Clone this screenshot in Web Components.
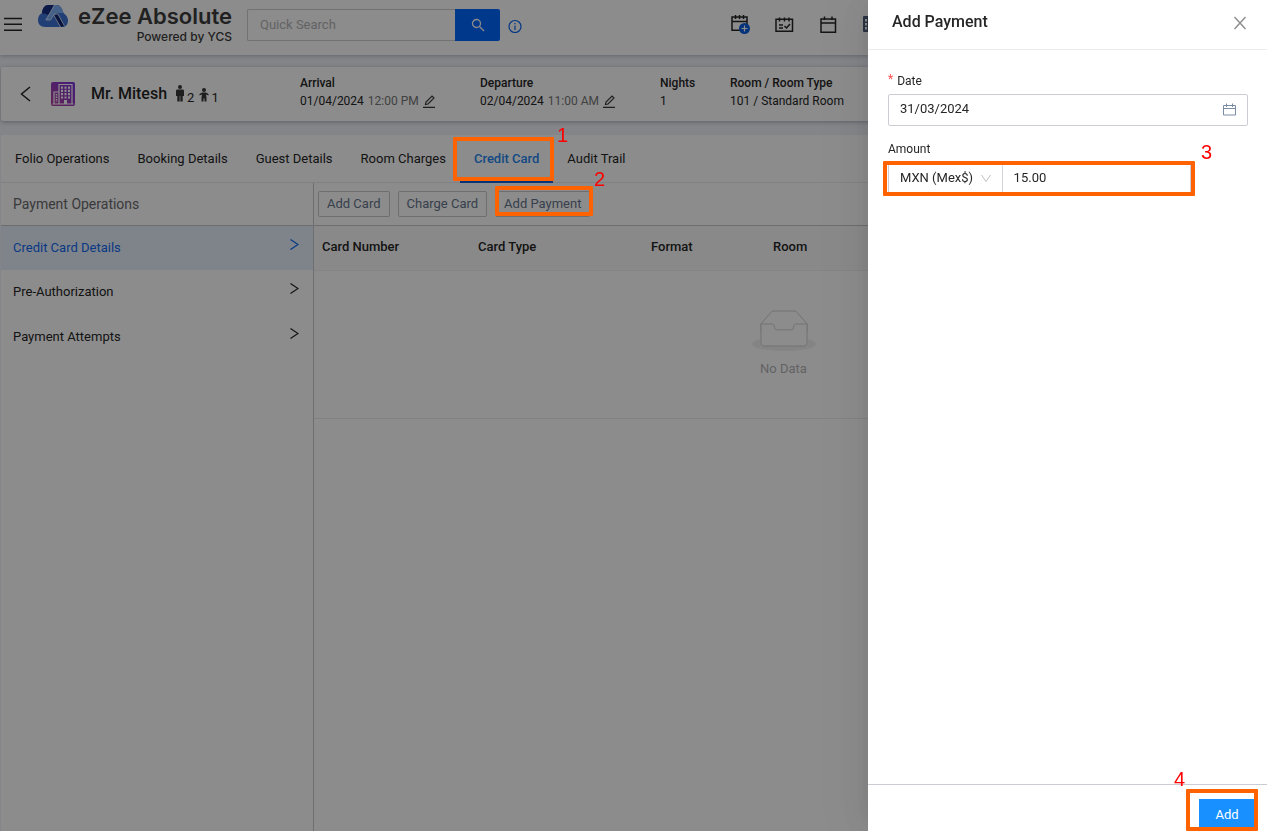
<!DOCTYPE html>
<html lang="en">
<head>
<meta charset="utf-8">
<title>eZee Absolute - Add Payment</title>
<style>
    html, body { margin: 0; min-height: 100%; }
    body {
        font-family: Roboto, "Liberation Sans", sans-serif;
        font-size: 13px;
        line-height: 20px;
        color: #262626;
        background: #eef2f8;
    }
</style>
</head>
<body>
<ezee-app></ezee-app>

<script>
const BASE = `
    *, *::before, *::after { box-sizing: border-box; }
    svg { display: block; flex: none; }
    button, input, select { font: inherit; color: inherit; margin: 0; }
    a { color: inherit; text-decoration: none; }
`;

function define(name, html, setup) {
    customElements.define(name, class extends HTMLElement {
        constructor() {
            super();
            this.attachShadow({ mode: 'open' });
        }

        connectedCallback() {
            this.shadowRoot.innerHTML = `<style>${BASE}</style>${html}`;
            if (setup) setup(this, this.shadowRoot);
        }
    });
}

// Numbered frame drawn over the control that a step is about
define('step-callout', `
    <style>
        :host {
            display: block;
            position: absolute;
            z-index: 30;
            border: 4px solid #ff6200;
            border-radius: 1px;
            pointer-events: none;
        }
        span {
            position: absolute;
            left: var(--num-x, 100%);
            top: var(--num-y, -20px);
            font: 20px/20px "Liberation Sans", Arial, sans-serif;
            color: #f00;
        }
    </style>
    <span><slot></slot></span>
`);

define('app-header', `
    <style>
        :host {
            display: flex;
            align-items: flex-start;
            position: relative;
            height: 55px;
            padding: 0 360px 0 4px;
            background: #fff;
            box-shadow: 0 1px 4px rgba(0, 21, 41, .25);
        }
        button { padding: 0; border: 0; background: none; display: block; }
        .menu { margin-top: 16px; }
        .brand { display: flex; margin: 4px 0 0 16px; color: #3c3c3c; font-family: Inter, Roboto, sans-serif; }
        .names { display: flex; flex-direction: column; align-items: flex-end; width: 164px; }
        .name { font-size: 22px; font-weight: 600; line-height: 24px; white-space: nowrap; }
        .by { font-size: 12px; font-weight: 500; line-height: 18px; white-space: nowrap; }
        .brand svg { margin-top: 1px; }
        form { display: flex; margin: 9px 0 0 15px; }
        input {
            width: 208px;
            height: 32px;
            padding: 0 12px 2px;
            border: 1px solid #d0d0d4;
            border-right: 0;
            border-radius: 2px 0 0 2px;
            background: #fff;
        }
        input::placeholder { color: #b4b4b8; opacity: 1; }
        .go {
            display: grid;
            place-items: center;
            width: 45px;
            height: 32px;
            border-radius: 0 2px 2px 0;
            background: #06f;
        }
        .info { margin: 19px 0 0 8px; }
        nav { display: flex; margin: 12px 0 0 auto; }
        nav button { width: 44px; }
    </style>
    <button class="menu" aria-label="Menu">
        <svg width="18" height="16" stroke="#262626" stroke-width="1.5"><path d="M0 2.500h18M0 8.300h18M0 14.300h18"/></svg>
    </button>
    <a class="brand" href="#">
        <svg width="30" height="22" viewBox="0 0 30 22">
            <path d="M10 0H19Q22 0 24 4L25.500 8Q30 11 30 16Q29.500 22 24 22H7Q0 22 0 15Q0 10 4 8Q5 0 10 0z" fill="#3e74d6"/>
            <path d="M4 8.500Q4.500 0 10.500 0H16L10.500 10Q7 8 4 8.500z" fill="#172d80"/>
            <path d="M16.500 0H19Q24 1 25.500 8H19L15.500 10.500L12 15H7L10.500 10z" fill="#7fb0f5"/>
            <path d="M16 11L19 8.500L26.500 21L23 22z" fill="#14266e"/>
            <path d="M16.500 0L8 15H12.500L16.500 9H20L26.500 21M16 10.500L22.500 22" fill="none" stroke="#dce8fa" stroke-width=".8"/>
        </svg>
        <span class="names"><span class="name">eZee Absolute</span><span class="by">Powered by YCS</span></span>
    </a>
    <form>
        <input type="search" placeholder="Quick Search" aria-label="Quick Search">
        <button class="go" type="button" aria-label="Search">
            <svg width="14" height="14" fill="none" stroke="#fff" stroke-width="1.3"><circle cx="5.500" cy="5.500" r="4"/><path d="M8.500 8.500l4.500 4.500"/></svg>
        </button>
    </form>
    <button class="info" aria-label="Help">
        <svg width="14" height="14" fill="none" stroke="#0b66f0" stroke-width="1.2"><circle cx="7" cy="7.500" r="6"/><path d="M7 3.900v1.400M7 6.500v4.500"/></svg>
    </button>
    <nav>
        <button aria-label="New booking">
            <svg width="20" height="22" fill="none" stroke="#262626" stroke-width="1.5"><path d="M10 18.200H1V5h15v7M1 9.500h15M4.500 3v4M8.500 3v4M12.500 3v4"/><circle cx="13.500" cy="16.500" r="5.500" fill="#0b5fe0" stroke="none"/><path d="M13.500 13.500v6M10.500 16.500h6" stroke="#fff" stroke-width="1.200"/></svg>
        </button>
        <button aria-label="Tasks">
            <svg width="19" height="20" fill="none" stroke="#262626" stroke-width="1.5"><path d="M1 6.300h16.500v12H1zM4.500 4.500v4M9.500 4.500v4M14 4.500v4M4 12h4M4 15h4M9.500 13l2 2 3.500-4"/></svg>
        </button>
        <button aria-label="Calendar">
            <svg width="18" height="20" fill="none" stroke="#262626" stroke-width="1.5"><path d="M2 6h14.500v13.200H2zM2 10h14.500M5.500 3.500V7M13 3.500V7"/></svg>
        </button>
        <button aria-label="Property">
            <svg width="18" height="20"><rect y="3" width="18" height="16" rx="1" fill="#4a5d78"/><path d="M3 6v2.500M3 10v2.500M3 14v2.500M8 6v2.500M8 10v2.500M8 14v2.500" stroke="#fff" stroke-width="2"/></svg>
        </button>
    </nav>
`);

const PENCIL = `<svg width="13" height="13" fill="none" stroke="#3a3a3a" stroke-width="1.2"><path d="M2.500 9.500L3 7 9 1l2 2-6 6zM0 12.300h12"/></svg>`;

define('guest-summary', `
    <style>
        :host {
            display: flex;
            height: 54px;
            padding: 7px 0 0 19px;
            border-radius: 2px;
            background: #fff;
            box-shadow: 0 1px 4px rgba(0, 21, 41, .3);
        }
        .who { display: flex; align-items: center; width: 280px; height: 40px; }
        .back { padding: 0; border: 0; background: none; }
        .room { margin: 0 16px 0 20px; }
        h1 { margin: 0 8px 0 0; font-size: 16px; font-weight: 500; white-space: nowrap; }
        .pax { display: flex; gap: 2px; margin-right: 5px; font-size: 13px; }
        .pax b { font-weight: 400; padding-top: 7px; }
        .pax svg { margin-top: 4px; }
        dl {
            display: grid;
            grid-template: 18px 18px / 180px 180px 70px 1fr;
            grid-auto-flow: column;
            flex: 1;
            margin: 0;
            font-size: 12px;
            line-height: 18px;
            white-space: nowrap;
        }
        dt { font-weight: 500; }
        dd { display: flex; align-items: center; gap: 4px; margin: 0; }
        time { color: #777; }
    </style>
    <div class="who">
        <button class="back" aria-label="Back"><svg width="11" height="16" fill="none" stroke="#262626" stroke-width="1.5"><path d="M10 1L1.500 8l8.500 7"/></svg></button>
        <svg class="room" width="24" height="24">
            <defs><linearGradient id="g" x1="1" y1="0" x2="0" y2="1"><stop offset="0" stop-color="#7a35e0"/><stop offset="1" stop-color="#b43f9c"/></linearGradient></defs>
            <rect width="24" height="24" rx="2" fill="url(#g)"/>
            <path d="M8 22V2.500h13V22M8 10H3v12M1.500 22h21" fill="none" stroke="#fff" stroke-width="1.200"/>
            <path d="M11 4.500v12M14.500 4.500v12M18 4.500v12" stroke="#fff" stroke-width="2" stroke-dasharray="2.200 1.100"/>
            <path d="M5.500 12v8" stroke="#fff" stroke-width="1.500" stroke-dasharray="1.500 1"/>
            <path d="M13 22v-4h3v4z" fill="#fff"/>
        </svg>
        <h1>Mr. Mitesh</h1>
        <span class="pax">
            <svg width="10" height="17" fill="#3a3a3a"><circle cx="5" cy="2" r="2"/><path d="M2 4.500h6Q9 4.500 9 6v5H7.700v5.500H5.300V11h-.6v5.500H2.300V11H1V6Q1 4.500 2 4.500z"/></svg>
            <b>2</b>
        </span>
        <span class="pax">
            <svg width="10" height="17" fill="#3a3a3a"><circle cx="5" cy="5" r="2"/><path d="M.5 9l2.500-1.500h4L9.500 9v1.500L7 9.500l.5 3v4h-2v-3h-1v3h-2v-4l.5-3-2.500 1z"/></svg>
            <b>1</b>
        </span>
    </div>
    <dl>
        <dt>Arrival</dt>
        <dd>01/04/2024 <time>12:00 PM</time> ${PENCIL}</dd>
        <dt>Departure</dt>
        <dd>02/04/2024 <time>11:00 AM</time> ${PENCIL}</dd>
        <dt>Nights</dt>
        <dd>1</dd>
        <dt>Room / Room Type</dt>
        <dd>101 / Standard Room</dd>
    </dl>
`);

define('tab-bar', `
    <style>
        :host { display: flex; height: 48px; border-bottom: 1px solid #ececf0; }
        a { position: relative; padding: 14px 14px 0; white-space: nowrap; }
        a.on { margin-bottom: -1px; font-weight: 500; color: #1f86ee; border-bottom: 2px solid #0b5fe0; }
        step-callout { left: -7px; top: 2px; width: 101px; height: 44px; --num-x: 100px; --num-y: -16px; }
    </style>
    <a href="#">Folio Operations</a>
    <a href="#">Booking Details</a>
    <a href="#">Guest Details</a>
    <a href="#">Room Charges</a>
    <a href="#" class="on">Credit Card<step-callout>1</step-callout></a>
    <a href="#">Audit Trail</a>
`);

define('side-menu', `
    <style>
        :host { display: block; width: 313px; border-right: 1px solid #c8c8cc; }
        h2 {
            height: 43px;
            margin: 0;
            padding: 11px 12px;
            border-bottom: 1px solid #c8c8cc;
            font-size: 14px;
            font-weight: 400;
            color: #6a6a6e;
        }
        a { display: flex; justify-content: space-between; height: 44px; padding: 12px 14px 0 12px; margin-bottom: 1px; }
        a.on { color: #1168f0; background: #e8f1fc; margin-bottom: 0; }
    </style>
    <h2>Payment Operations</h2>
    <slot></slot>
`, (host, root) => {
    host.getAttribute('items').split('|').forEach((label, i) => {
        root.querySelector('slot').insertAdjacentHTML('beforebegin', `
            <a href="#" class="${i === 0 ? 'on' : ''}">${label}
                <svg width="9" height="14" fill="none" stroke="currentColor" stroke-width="1.3"><path d="M.5 1.500l7.500 5-7.500 5"/></svg>
            </a>`);
    });
});

define('card-list', `
    <style>
        :host { display: block; flex: 1; min-width: 0; }
        .tools { display: flex; gap: 8px; height: 43px; padding: 8px 4px 0; border-bottom: 1px solid #c8c8cc; }
        button {
            position: relative;
            height: 26px;
            padding: 0 8px;
            border: 1px solid #c8c8cc;
            border-radius: 2px;
            background: #fff;
            color: #66758c;
            white-space: nowrap;
        }
        step-callout { left: -1px; top: -6px; width: 98px; height: 30px; --num-x: 95px; --num-y: -21px; }
        table { width: 100%; table-layout: fixed; border-collapse: collapse; }
        th {
            height: 44px;
            padding: 0 8px 2px;
            border-bottom: 1px solid #f0f0f2;
            background: #fafafa;
            text-align: left;
            font-weight: 500;
        }
        td { height: 148px; padding: 0; border-bottom: 1px solid #ececf0; color: #b4b4b8; text-align: center; }
        td svg { margin: 0 auto 8px; }
    </style>
    <div class="tools">
        <button>Add Card</button>
        <button>Charge Card</button>
        <button>Add Payment<step-callout>2</step-callout></button>
    </div>
    <table>
        <colgroup><col style="width:156px"><col style="width:173px"><col style="width:122px"><col></colgroup>
        <thead><tr><th>Card Number</th><th>Card Type</th><th>Format</th><th>Room</th></tr></thead>
        <tbody><tr><td colspan="4">
            <svg width="64" height="41" viewBox="0 0 64 41">
                <g transform="translate(0 1)" fill="none">
                    <ellipse cx="32" cy="33" rx="32" ry="7" fill="#f1f1f3"/>
                    <g stroke="#d0d0d4" fill="#fff">
                        <path d="M55 12.760L44.854 1.258C44.367.474 43.656 0 42.907 0H21.093c-.749 0-1.460.474-1.947 1.257L9 12.761V22h46v-9.240z"/>
                        <path d="M41.613 15.931c0-1.605.994-2.930 2.227-2.931H55v18.137C55 33.260 53.680 35 52.050 35h-40.100C10.320 35 9 33.259 9 31.137V13h11.160c1.233 0 2.227 1.323 2.227 2.928v.022c0 1.605 1.005 2.901 2.237 2.901h14.752c1.232 0 2.237-1.308 2.237-2.913v-.007z"/>
                    </g>
                </g>
            </svg>
            No Data
        </td></tr></tbody>
    </table>
`);

define('payment-drawer', `
    <style>
        :host {
            display: flex;
            flex-direction: column;
            position: fixed;
            inset: 0 0 0 auto;
            z-index: 20;
            width: 399px;
            background: #fff;
            box-shadow: -6px 0 16px -8px rgba(0, 0, 0, .08), -9px 0 28px rgba(0, 0, 0, .05), -12px 0 48px 16px rgba(0, 0, 0, .03);
        }
        header { display: flex; justify-content: space-between; height: 50px; padding: 12px 20px 0 24px; border-bottom: 1px solid #ececec; }
        h2 { margin: 0; font-size: 16px; font-weight: 500; }
        .close { height: 22px; padding: 0; border: 0; background: none; }
        form { display: flex; flex-direction: column; flex: 1; padding: 21px 19px 0 20px; }
        label { height: 20px; font-size: 12px; }
        .req { display: flex; gap: 4px; }
        .req::before { content: "*"; line-height: 16px; color: #ff4d4f; }
        .date {
            display: flex;
            align-items: center;
            height: 32px;
            margin: 3px 0 13px;
            padding-right: 11px;
            border: 1px solid #ccccd4;
            border-radius: 2px;
        }
        input { min-width: 0; height: 28px; padding: 0 11px; border: 0; background: none; }
        .date input { flex: 1; padding-bottom: 3px; }
        .amount { position: relative; display: flex; width: 303px; height: 32px; margin-top: 3px; border: 1px solid #ccccd4; border-radius: 2px; }
        .currency { position: relative; display: flex; align-items: center; width: 114px; border-right: 1px solid #d4d4da; }
        .currency svg { position: absolute; right: 11px; pointer-events: none; }
        select { appearance: none; width: 100%; height: 30px; padding: 0 0 0 11px; border: 0; background: none; }
        .amount step-callout { left: -6px; top: -2px; width: 312px; height: 35px; --num-x: 314px; --num-y: -23px; }
        footer { display: flex; justify-content: flex-end; height: 47px; padding: 14px 12px 0; border-top: 1px solid #ccccd4; }
        .add { position: relative; width: 56px; height: 32px; padding: 0; border: 0; background: #1890ff; color: #fff; }
        .add step-callout { left: -13px; top: -10px; width: 72px; height: 42px; --num-x: -16px; --num-y: -24px; }
    </style>
    <header>
        <h2>Add Payment</h2>
        <button class="close" aria-label="Close"><svg width="14" height="14" fill="none" stroke="#8c8c8c" stroke-width="1.4"><path d="M1.500 1l11 12M12.500 1l-11 12"/></svg></button>
    </header>
    <form>
        <label class="req" for="date">Date</label>
        <div class="date">
            <input id="date" value="31/03/2024">
            <svg width="13" height="14" fill="none" stroke="#7b8ba3"><path d="M.5 2.500h12v9.500H.5zM.5 5.500h12M3.500 .5v3.500M9.500 .5v3.500"/></svg>
        </div>
        <label for="amount">Amount</label>
        <div class="amount">
            <div class="currency">
                <select aria-label="Currency"><option>MXN (Mex$)</option></select>
                <svg width="10" height="8" fill="none" stroke="#bfbfbf"><path d="M.5 1L5 7.500 9.500 1"/></svg>
            </div>
            <input id="amount" value="15.00">
            <step-callout>3</step-callout>
        </div>
    </form>
    <footer><button class="add" type="button">Add<step-callout>4</step-callout></button></footer>
`);

define('ezee-app', `
    <style>
        :host { display: flex; flex-direction: column; min-height: 100vh; }
        main { display: flex; flex-direction: column; flex: 1; gap: 14px; padding: 12px 14px 0 1px; }
        .folio { display: flex; flex-direction: column; flex: 1; border-radius: 2px; background: #fff; }
        .body { display: flex; flex: 1; }
        .mask { position: fixed; inset: 0; z-index: 10; background: rgba(0, 0, 0, .45); }
    </style>
    <app-header></app-header>
    <main>
        <guest-summary></guest-summary>
        <section class="folio">
            <tab-bar></tab-bar>
            <div class="body">
                <side-menu items="Credit Card Details|Pre-Authorization|Payment Attempts"></side-menu>
                <card-list></card-list>
            </div>
        </section>
    </main>
    <div class="mask"></div>
    <payment-drawer></payment-drawer>
`);
</script>
</body>
</html>
